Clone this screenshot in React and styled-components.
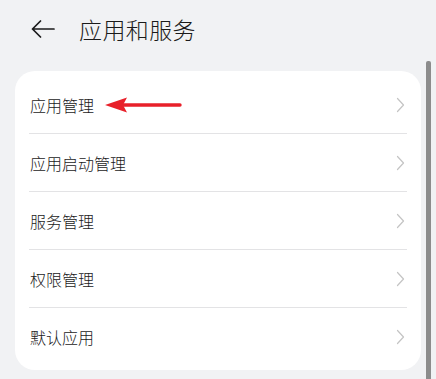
import React from 'react';
import styled, { createGlobalStyle } from 'styled-components';

const GlobalStyle = createGlobalStyle`
    html, body { margin: 0; padding: 0; background: #f1f2f4; }
    body { font-family: "Noto Sans CJK SC", "Noto Sans", sans-serif; }
`

const Page = styled.div`
    position: relative;
    width: 436px;
    height: 379px;
    overflow: hidden;
    background: #f1f2f4;
`

const Header = styled.div`
    display: flex;
    align-items: center;
    height: 58px;
    padding-left: 31px;
`

const BackButton = styled.svg`
    width: 24px;
    height: 18px;
    margin-right: 24px;
    flex: none;
`

const Title = styled.h1`
    margin: 0;
    font-size: 23px;
    font-weight: 300;
    color: #1a1a1a;
    letter-spacing: 0.4px;
    line-height: 1;
`

const Card = styled.div`
    margin: 13px 15px 0 15px;
    padding: 5px 14px 4px 14px;
    background: #ffffff;
    border-radius: 20px;
`

const Row = styled.div`
    display: flex;
    align-items: center;
    height: 58px;
    padding: 0 0 0 1px;
    border-bottom: ${props => (props.last ? 'none' : '1px solid #e3e3e5')};
    box-sizing: border-box;
`

const Label = styled.span`
    font-size: 16px;
    font-weight: 300;
    color: #1a1a1a;
    line-height: 1;
`

const Spacer = styled.div`
    flex: 1;
`

const Chevron = styled.svg`
    width: 9px;
    height: 16px;
    margin-right: 2px;
    flex: none;
`

const Pointer = styled.svg`
    width: 80px;
    height: 18px;
    margin-left: 10px;
    flex: none;
`

const ScrollThumb = styled.div`
    position: absolute;
    left: 426px;
    top: 61px;
    width: 5px;
    height: 330px;
    background: #8c8c8c;
    border-radius: 2px 2px 0 0;
`

const items = ['应用管理', '应用启动管理', '服务管理', '权限管理', '默认应用'];

const App = () => {
    return (
        <React.Fragment>
            <GlobalStyle />
            <Page>
                <Header>
                    <BackButton viewBox="0 0 24 18">
                        <path d="M23 9H1.5M9.5 1L1.5 9l8 8" fill="none" stroke="#1a1a1a" strokeWidth="1.7" strokeLinecap="round" strokeLinejoin="round" />
                    </BackButton>
                    <Title>应用和服务</Title>
                </Header>
                <Card>
                    {items.map((item, i) => (
                        <Row key={item} last={i === items.length - 1}>
                            <Label>{item}</Label>
                            {i === 0 ? (
                                <Pointer viewBox="0 0 80 18">
                                    <path d="M1 9L23 1.5L19 9L23 16.5Z" fill="#e8202a" />
                                    <path d="M19 9H76" stroke="#e8202a" strokeWidth="3.4" strokeLinecap="round" />
                                </Pointer>
                            ) : null}
                            <Spacer />
                            <Chevron viewBox="0 0 9 16">
                                <path d="M1.5 1.5L7.5 8L1.5 14.5" fill="none" stroke="#c4c4c4" strokeWidth="1.2" strokeLinecap="round" strokeLinejoin="round" />
                            </Chevron>
                        </Row>
                    ))}
                </Card>
                <ScrollThumb />
            </Page>
        </React.Fragment>
    );
}

export default App;
